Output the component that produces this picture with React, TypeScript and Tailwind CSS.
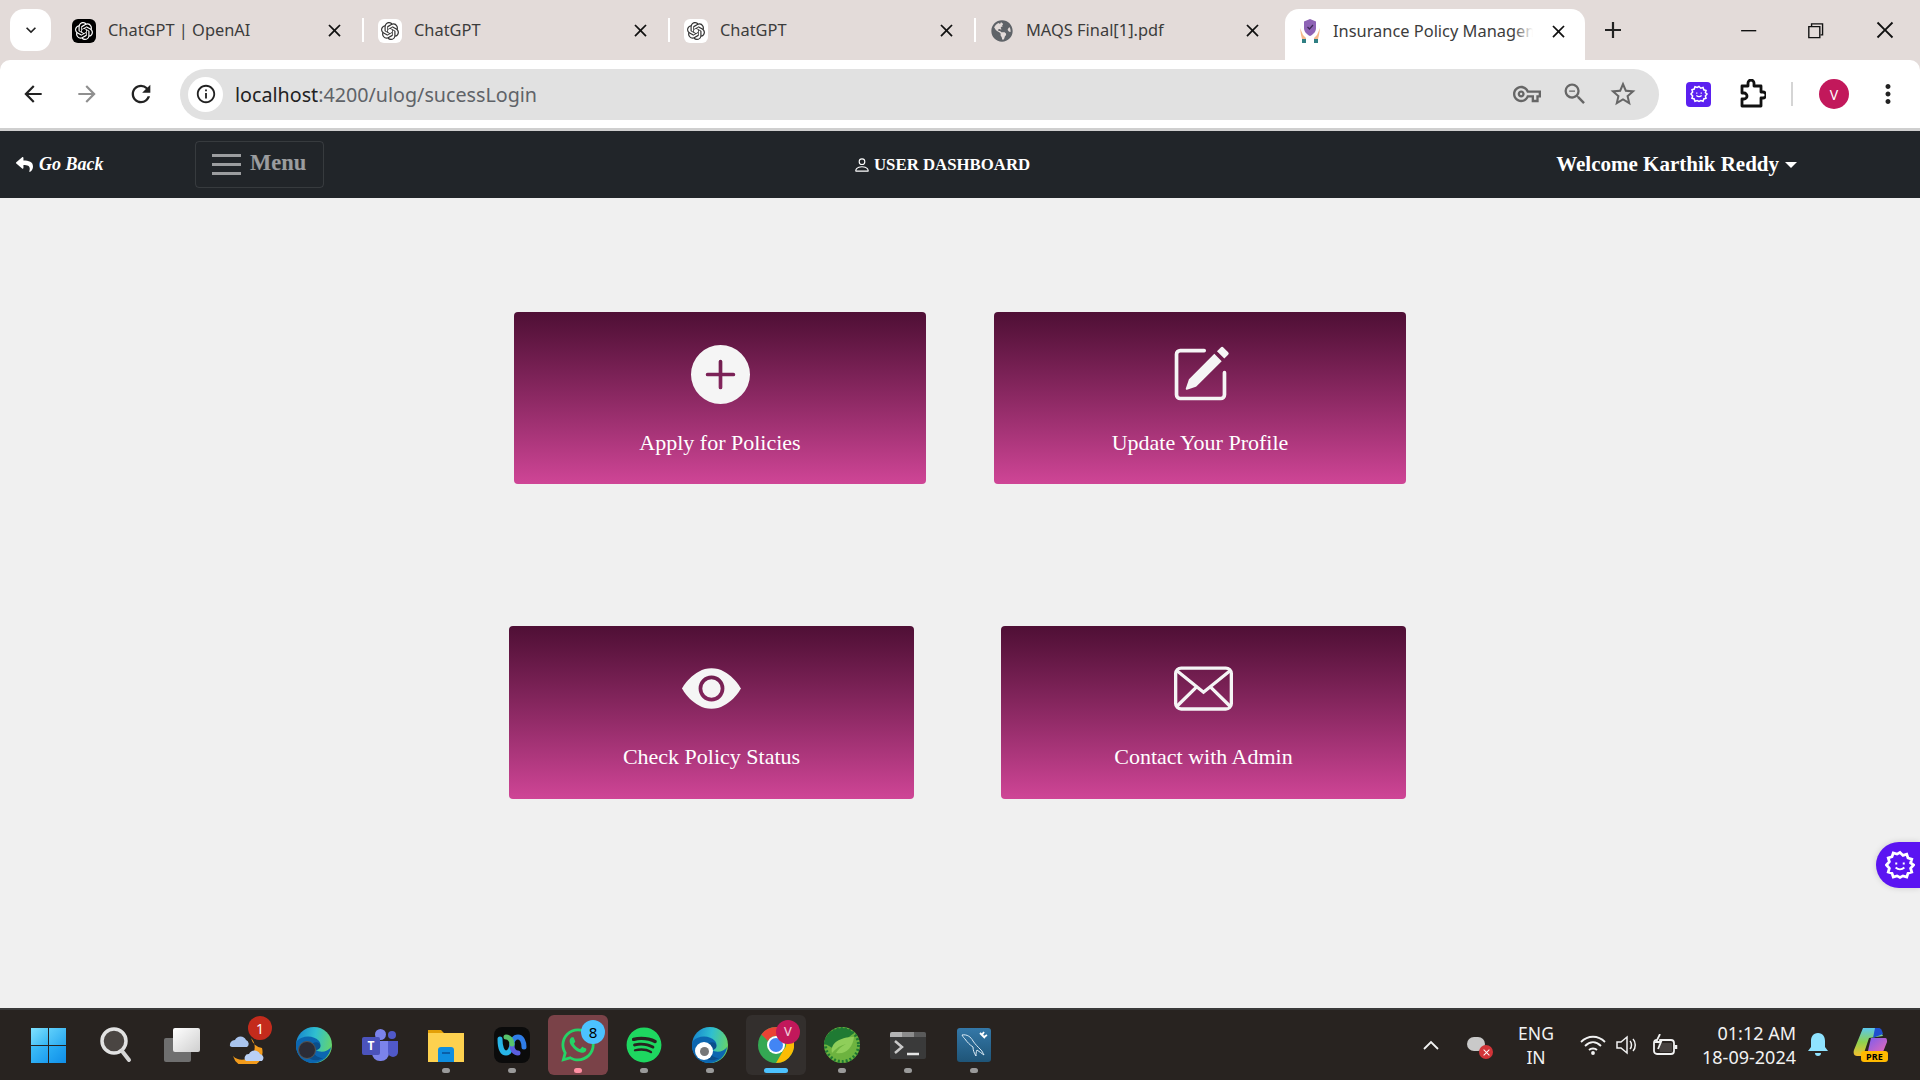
import type { ReactNode } from 'react'
import { BsEyeFill, BsPencilSquare, BsPerson, BsPlusCircleFill } from 'react-icons/bs'
import { FaGlobeAmericas, FaReply, FaSpotify, FaWhatsapp } from 'react-icons/fa'
import {
  MdArrowBack,
  MdArrowForward,
  MdClose,
  MdInfoOutline,
  MdKeyboardArrowDown,
  MdMoreVert,
  MdOutlineVpnKey,
  MdRefresh,
  MdStarBorder,
  MdZoomOut,
} from 'react-icons/md'
import { SiOpenai } from 'react-icons/si'
import { VscChromeClose, VscChromeMinimize, VscChromeRestore } from 'react-icons/vsc'

const uiFont = "font-['Noto_Sans',sans-serif]"
const serif = "font-['Liberation_Serif',serif]"

function ShieldFavicon() {
  return (
    <svg width="24" height="24" viewBox="0 0 24 24">
      <path d="M12 0l6 2.500v6.500c0 4-3 6.500-6 8-3-1.500-6-4-6-8V2.500z" fill="#8e63b5" />
      <path d="M9.500 8l2 2 3.500-4" stroke="#3d2a55" strokeWidth="1.200" fill="none" />
      <path d="M2 9l3 7 3 3v1H4l-1-4zM22 9l-3 7-3 3v1h4l1-4z" fill="#f6b98a" />
      <rect x="4" y="20" width="4" height="4" fill="#2f7f83" />
      <rect x="16" y="20" width="4" height="4" fill="#2f7f83" />
    </svg>
  )
}

function MiniSpark({ size, color, width = 2 }: { size: number; color: string; width?: number }) {
  return (
    <svg width={size} height={size} viewBox="0 0 24 24" fill="none" stroke={color} strokeWidth={width}>
      <path d="M12 2l2.400 2.300 3-.9 1 3 3 1-.9 3L22.800 12l-2.300 2.600.9 3-3 1-1 3-3-.9L12 22l-2.400-1.300-3 .9-1-3-3-1 .9-3L1.200 12l2.300-2.600-.9-3 3-1 1-3 3 .9z" />
      <path d="M9 10v1.500M15 10v1.500M8.500 14c2 1.800 5 1.800 7 0" strokeWidth="1.600" />
    </svg>
  )
}

function Tab({ icon, title, last }: { icon: ReactNode; title: string; last?: boolean }) {
  return (
    <>
      <div className="flex h-[51px] w-[304px] items-center pb-[8px] pl-[14px]">
        <div className="flex h-6 w-6 shrink-0 items-center justify-center">{icon}</div>
        <span className="ml-3 flex-1 truncate text-[16.4px] text-[#3c3c3c]">{title}</span>
        <MdClose className="mr-[17px] text-[21px] text-[#111]" />
      </div>
      {!last && <div className="mb-[9px] h-6 w-[2px] bg-white" />}
    </>
  )
}

function ChatIcon({ dark }: { dark?: boolean }) {
  return (
    <div className={`flex h-6 w-6 items-center justify-center rounded-[6px] ${dark ? 'bg-black text-white' : 'bg-white text-[#333]'}`}>
      <SiOpenai size={18} />
    </div>
  )
}

function TabStrip() {
  return (
    <div className={`flex h-[60px] items-end bg-[#e3dbd9] ${uiFont}`}>
      <div className="mb-[9px] ml-[10px] mr-[7px] flex h-[42px] w-[41px] items-center justify-center rounded-[14px] bg-white">
        <MdKeyboardArrowDown size={20} className="text-[#222]" />
      </div>
      <div className="flex h-[51px] items-center">
        <Tab icon={<ChatIcon dark />} title="ChatGPT | OpenAI" />
        <Tab icon={<ChatIcon />} title="ChatGPT" />
        <Tab icon={<ChatIcon />} title="ChatGPT" />
        <Tab icon={<FaGlobeAmericas size={22} className="text-[#5f6368]" />} title="MAQS Final[1].pdf" last />
      </div>
      <div className="ml-[5px] flex h-[51px] w-[300px] items-center rounded-t-[14px] bg-white pb-[7px] pl-[13px]">
        <ShieldFavicon />
        <span className="relative ml-[11px] w-[200px] overflow-hidden whitespace-nowrap text-[16.4px] text-[#3c3c3c]">
          Insurance Policy Management
          <span className="absolute inset-y-0 right-0 w-5 bg-gradient-to-r from-transparent to-white" />
        </span>
        <MdClose className="ml-[15px] text-[21px] text-[#111]" />
      </div>
      <div className="mb-[9px] ml-[16px] flex h-[42px] w-[24px] items-center justify-center text-[#222]">
        <svg width="18" height="18" viewBox="0 0 18 18" stroke="currentColor" strokeWidth="2.200">
          <path d="M9 1v16M1 9h16" />
        </svg>
      </div>
      <div className="mb-[9px] ml-[112px] flex h-[42px] items-center text-[#111]">
        <VscChromeMinimize size={22} />
        <VscChromeRestore size={22} className="ml-[45px]" />
        <VscChromeClose size={24} className="ml-[47px]" />
      </div>
    </div>
  )
}

function PuzzleIcon() {
  return (
    <svg className="ml-[27px]" width="28" height="30" viewBox="0 0 28 30" fill="none" stroke="#111" strokeWidth="2.800" strokeLinejoin="round">
      <path d="M4 7h6V4a3 3 0 0 1 6 0v3h7v6h2a3 3 0 0 1 0 6h-2v8H4v-7h2a3 3 0 0 0 0-6H4z" />
    </svg>
  )
}

function Toolbar() {
  return (
    <div className="border-b-[3px] border-[#cfcfcf] bg-[#e3dbd9]">
      <div className={`flex h-[68px] items-center rounded-t-[10px] bg-white ${uiFont}`}>
        <MdArrowBack size={26} className="ml-[20px] text-[#222]" />
        <MdArrowForward size={26} className="ml-[28px] text-[#8f8f8f]" />
        <MdRefresh size={28} className="ml-[27px] text-[#222]" />
        <div className="ml-[25px] flex h-[51px] w-[1479px] items-center rounded-full bg-[#e1e1e1] pl-2">
          <div className="flex h-[35px] w-[35px] items-center justify-center rounded-full bg-white">
            <MdInfoOutline size={22} className="text-[#222]" />
          </div>
          <div className="ml-3 mt-[1px] text-[19.7px] text-[#5f6368]">
            <span className="text-[#222]">localhost</span>:4200/ulog/sucessLogin
          </div>
          <MdOutlineVpnKey size={28} className="ml-auto text-[#666]" />
          <MdZoomOut size={28} className="ml-[20px] text-[#666]" />
          <MdStarBorder size={30} className="ml-[19px] mr-[21px] text-[#666]" />
        </div>
        <div className="ml-[27px] flex h-[25px] w-[25px] items-center justify-center rounded-[4px] bg-[#5b20f0]">
          <MiniSpark size={18} color="#ffffff" />
        </div>
        <PuzzleIcon />
        <div className="ml-[25px] h-6 w-[2px] bg-[#d5d5d5]" />
        <div className="ml-[26px] flex h-[30px] w-[30px] items-center justify-center rounded-full bg-[#c2185b] text-[14px] text-white">V</div>
        <MdMoreVert size={30} className="ml-[24px] text-[#222]" />
      </div>
    </div>
  )
}

function Navbar() {
  return (
    <nav className={`flex h-[67px] items-center bg-[#212529] text-white ${serif}`}>
      <div className="flex w-[195px] items-center pl-4">
        <FaReply size={17} />
        <span className="ml-[6px] text-[18px] font-bold italic">Go Back</span>
      </div>
      <div className="flex h-[47px] w-[129px] items-center rounded-[4px] border border-white/10 pl-4 text-white/55">
        <div className="flex w-[29px] flex-col gap-[6px]">
          <div className="h-[3px] bg-white/55" />
          <div className="h-[3px] bg-white/55" />
          <div className="h-[3px] bg-white/55" />
        </div>
        <span className="mb-[3px] ml-[9px] text-[22.500px] font-bold">Menu</span>
      </div>
      <div className="ml-[529px] flex items-center">
        <BsPerson size={18} />
        <span className="ml-[3px] mt-[1px] text-[16.800px] font-bold">USER DASHBOARD</span>
      </div>
      <div className="ml-auto mr-[123px] flex items-center">
        <span className="text-[21px] font-bold">Welcome Karthik Reddy</span>
        <div className="ml-[6px] h-0 w-0 border-x-[6px] border-t-[6px] border-x-transparent border-t-white" />
      </div>
    </nav>
  )
}

function EnvelopeIcon() {
  return (
    <svg width="59" height="59" viewBox="0 0 16 16" fill="none" stroke="currentColor" strokeWidth="0.9">
      <rect x="0.450" y="2.450" width="15.100" height="11.100" rx="1.500" />
      <path d="M0.800 3.200 8 9l7.200-5.800M0.800 12.800 6 7.700M15.200 12.800 10 7.700" />
    </svg>
  )
}

function Card({ icon, label, size }: { icon: ReactNode; label: string; size: string }) {
  return (
    <div className={`flex flex-col items-center rounded-[4px] bg-gradient-to-b from-[#4f0f35] to-[#cf4596] text-white ${size} ${serif}`}>
      <div className="mt-[32px] flex h-[60px] w-[60px] items-center justify-center text-[#f5f5f5]">{icon}</div>
      <div className="mt-[27px] text-[22px] leading-6">{label}</div>
    </div>
  )
}

function FloatingButton() {
  return (
    <div className="absolute right-0 top-[644px] flex h-[46px] w-[44px] items-center justify-center rounded-l-full bg-[#5b14f2] pl-1 shadow-[0_0_6px_rgba(0,0,0,0.15)]">
      <MiniSpark size={30} color="#ffffff" width={2.200} />
    </div>
  )
}

function WindowsLogo() {
  return (
    <div className="mr-1 grid h-[35px] w-[35px] grid-cols-2 gap-[1px]">
      <div className="bg-gradient-to-br from-[#7fe3ff] to-[#2fb5f2]" />
      <div className="bg-gradient-to-br from-[#5fd0fb] to-[#22a7ef]" />
      <div className="bg-gradient-to-br from-[#3fc0f7] to-[#1a9bef]" />
      <div className="bg-gradient-to-br from-[#2bb0f5] to-[#0f8ee8]" />
    </div>
  )
}

function SearchIcon() {
  return (
    <svg width="34" height="38" viewBox="0 0 34 38" fill="none">
      <circle cx="15" cy="15" r="12" fill="#4a4542" stroke="#e2e2e2" strokeWidth="3.500" />
      <path d="M23 25l7 9" stroke="#d5d5d5" strokeWidth="4" strokeLinecap="round" />
    </svg>
  )
}

function TaskView() {
  return (
    <div className="relative h-[34px] w-[36px]">
      <div className="absolute bottom-0 left-0 h-[24px] w-[27px] rounded-[2px] bg-[#6f6f6f]" />
      <div className="absolute right-0 top-0 h-[24px] w-[27px] rounded-[2px] bg-gradient-to-br from-white to-[#cfcfcf]" />
    </div>
  )
}

function WidgetsIcon() {
  return (
    <svg width="38" height="38" viewBox="0 0 38 38">
      <path d="M22 12a13 13 0 0 0 11 10A15 15 0 0 1 4 30a12 12 0 0 0 18-18z" fill="#f29b1c" />
      <path d="M1 20a5 5 0 0 1 5-6 6 6 0 0 1 11 0 4 4 0 0 1 1 7H4a3 3 0 0 1-3-1z" fill="#a9c4ee" />
      <path d="M17 35a4 4 0 0 1 3-7 6 6 0 0 1 11 0 4 4 0 0 1 2 7z" fill="#b9d0f5" />
    </svg>
  )
}

function EdgeIcon({ id }: { id: string }) {
  return (
    <svg width="36" height="36" viewBox="0 0 36 36">
      <defs>
        <linearGradient id={id} x1="0" y1="0.300" x2="1" y2="0.500">
          <stop offset="0" stopColor="#1787cf" />
          <stop offset="0.500" stopColor="#2fbfd0" />
          <stop offset="1" stopColor="#66d46a" />
        </linearGradient>
      </defs>
      <circle cx="18" cy="18" r="18" fill={`url(#${id})`} />
      <path d="M1 14c5-6 17-6 22 0 3 4 1 8-3 9 4 3 12 2 15-3-1 9-9 16-18 16C7 36 0 28 0 19c0-2 0-3 1-5z" fill="#0c66b0" />
      <path d="M14 20c1-4 6-6 9-4 3 3 1 7-3 7-2 0-3 1-2 3 1 3 6 5 9 5-8 5-16 1-17-5 0-2 2-4 4-6z" fill="#0a4f8c" />
    </svg>
  )
}

function TeamsIcon() {
  return (
    <div className="relative h-[36px] w-[36px]">
      <div className="absolute left-[13px] top-[2px] h-[11px] w-[11px] rounded-full bg-[#7b83eb]" />
      <div className="absolute right-[2px] top-[4px] h-[8px] w-[8px] rounded-full bg-[#5059c9]" />
      <div className="absolute bottom-[2px] left-[10px] h-[20px] w-[17px] rounded-b-[8px] bg-[#7b83eb]" />
      <div className="absolute bottom-[6px] right-0 h-[16px] w-[10px] rounded-b-[5px] bg-[#5059c9]" />
      <div className="absolute left-0 top-[10px] flex h-[18px] w-[18px] items-center justify-center rounded-[2px] bg-[#4b53bc] text-[12px] font-bold text-white">T</div>
    </div>
  )
}

function FolderIcon() {
  return (
    <svg width="36" height="34" viewBox="0 0 36 34">
      <path d="M0 2h13l3 3h20v6H0z" fill="#e3a008" />
      <rect y="5" width="36" height="29" fill="#fdd14f" />
      <path d="M10 22a3 3 0 0 1 3-3h10a3 3 0 0 1 3 3v12H10z" fill="#0f8ee0" />
      <rect x="14" y="24" width="8" height="2" fill="#0a5fa8" />
    </svg>
  )
}

function WebexIcon() {
  return (
    <div className="flex h-[36px] w-[36px] items-center justify-center rounded-[8px] bg-[#0b0b0b]">
      <svg width="30" height="22" viewBox="0 0 30 22" fill="none" strokeWidth="5" strokeLinecap="round">
        <path d="M3 5c0 8 2 14 6 14s6-6 6-9" stroke="#27b5e8" />
        <path d="M15 10c0-3 2-7 6-7s6 5 6 10" stroke="#2f7de8" />
        <path d="M15 12c0 3 2 7 6 7" stroke="#5b5fe0" />
        <path d="M9 3c3 0 6 3 6 7" stroke="#58c26b" />
      </svg>
    </div>
  )
}

function ChromeIcon() {
  return (
    <svg width="36" height="36" viewBox="0 0 36 36">
      <circle cx="18" cy="18" r="18" fill="#34a853" />
      <path d="M18 0a18 18 0 0 1 15.600 9H18a9 9 0 0 0-8 5L3.400 7.500A18 18 0 0 1 18 0z" fill="#ea4335" />
      <path d="M33.600 9A18 18 0 0 1 18 36l7.800-13.500A9 9 0 0 0 25 9z" fill="#fbbc04" />
      <circle cx="18" cy="18" r="9" fill="white" />
      <circle cx="18" cy="18" r="7" fill="#4285f4" />
    </svg>
  )
}

function SpringIcon() {
  return (
    <svg width="36" height="36" viewBox="0 0 36 36">
      <circle cx="18" cy="18" r="18" fill="#6db33f" />
      <circle cx="18" cy="18" r="16.500" fill="none" stroke="#1f7a33" strokeWidth="3" strokeDasharray="2 2" />
      <path d="M0 16A18 18 0 0 1 30 6L10 22z" fill="#1f7a33" />
      <path d="M8 26c-2-10 8-16 22-16-1 10-8 18-18 16 2-4 6-7 10-9-5 1-10 4-14 9z" fill="#8fce5a" />
    </svg>
  )
}

function TerminalIcon() {
  return (
    <div className="flex h-[27px] w-[36px] flex-col overflow-hidden rounded-[2px] bg-[#3a3a3a]">
      <div className="flex h-[5px]">
        <div className="w-[12px] bg-[#b5b5b5]" />
        <div className="w-[12px] bg-[#8c8c8c]" />
        <div className="w-[12px] bg-[#5a5a5a]" />
      </div>
      <svg width="36" height="22" viewBox="0 0 36 22" fill="none" stroke="#c9c9c9" strokeWidth="2.500">
        <path d="M5 4l7 6-7 6" />
        <path d="M17 17h12" stroke="#e5e5e5" />
      </svg>
    </div>
  )
}

function MysqlIcon() {
  return (
    <div className="flex h-[34px] w-[34px] items-center justify-center rounded-[3px] bg-gradient-to-b from-[#3478a8] to-[#1f5578]">
      <svg width="30" height="30" viewBox="0 0 30 30" fill="none" stroke="#dcebf5" strokeWidth="1">
        <path d="M3 5c5-1 9 2 11 6 2 3 5 6 8 9 1 1 2 3 3 5-2-2-5-3-7-5-1 2-1 4-1 6-2-3-3-6-3-9-3-2-6-5-8-8-1-1-2-2-3-4z" />
        <path d="M21 3l5 5M25 2l-2 3 2 2 3-2" strokeWidth="1.800" stroke="#ffffff" />
      </svg>
    </div>
  )
}

function CopilotIcon() {
  return (
    <div className="relative ml-[25px] h-[34px] w-[36px]">
      <svg width="34" height="28" viewBox="0 0 34 28">
        <defs>
          <linearGradient id="copilotA" x1="0" y1="0" x2="0" y2="1">
            <stop offset="0" stopColor="#5bc8ef" />
            <stop offset="0.500" stopColor="#8ed14f" />
            <stop offset="1" stopColor="#f5c02e" />
          </linearGradient>
          <linearGradient id="copilotB" x1="0" y1="0" x2="1" y2="1">
            <stop offset="0" stopColor="#7a5cf0" />
            <stop offset="1" stopColor="#f06bb0" />
          </linearGradient>
        </defs>
        <path d="M10 0h16l4 8-14 2-6 18H4c-3 0-4-3-3-6z" fill="url(#copilotA)" />
        <path d="M22 0h4c2 0 3 2 4 6l-10 4z" fill="#1f4fd0" />
        <path d="M18 10h14c2 0 2 2 2 4l-4 10c-1 2-2 3-5 3H14z" fill="url(#copilotB)" />
      </svg>
      <div className="absolute bottom-0 left-[8px] flex h-[11px] w-[27px] items-center justify-center rounded-[3px] bg-[#ffb900] text-[9px] font-bold tracking-wide text-black">PRE</div>
    </div>
  )
}

const taskbarApps: { icon: ReactNode; dot?: 'gray' | 'pink' | 'blue'; bg?: string; badge?: ReactNode }[] = [
  { icon: <WindowsLogo /> },
  { icon: <SearchIcon /> },
  { icon: <TaskView /> },
  {
    icon: <WidgetsIcon />,
    badge: <div className="absolute left-[30px] top-[1px] flex h-6 w-6 items-center justify-center rounded-full bg-[#c42b1c] text-[14px] text-white">1</div>,
  },
  {
    icon: <EdgeIcon id="edgeA" />,
    badge: <div className="absolute left-[14px] top-[26px] h-[18px] w-[18px] rounded-full border border-[#555] bg-[#2c2c36]" />,
  },
  { icon: <TeamsIcon /> },
  { icon: <FolderIcon />, dot: 'gray' },
  { icon: <WebexIcon />, dot: 'gray' },
  {
    icon: <FaWhatsapp size={38} className="text-[#25d366]" />,
    dot: 'pink',
    bg: 'bg-[#7a4248]',
    badge: <div className="absolute left-[33px] top-[5px] flex h-6 w-6 items-center justify-center rounded-full bg-[#4cc2ff] text-[15px] text-black">8</div>,
  },
  { icon: <FaSpotify size={36} className="text-[#1ed760]" />, dot: 'gray' },
  {
    icon: <EdgeIcon id="edgeB" />,
    dot: 'gray',
    badge: (
      <div className="absolute left-[15px] top-[27px] flex h-[18px] w-[18px] items-center justify-center rounded-full bg-white">
        <div className="h-[9px] w-[9px] rounded-full bg-[#777]" />
      </div>
    ),
  },
  {
    icon: <ChromeIcon />,
    dot: 'blue',
    bg: 'bg-[#332f2d]',
    badge: <div className="absolute left-[30px] top-[5px] flex h-6 w-6 items-center justify-center rounded-full bg-[#c2185b] text-[13px] text-white/80">V</div>,
  },
  { icon: <SpringIcon />, dot: 'gray' },
  { icon: <TerminalIcon />, dot: 'gray' },
  { icon: <MysqlIcon />, dot: 'gray' },
]

function TaskbarApp({ icon, dot, bg, badge }: (typeof taskbarApps)[number]) {
  return (
    <div className={`relative flex h-[60px] w-[60px] items-center justify-center rounded-[6px] ${bg ?? ''}`}>
      {icon}
      {badge}
      {dot === 'gray' && <div className="absolute bottom-[2px] h-[5px] w-[8px] rounded-full bg-[#9a9a9a]" />}
      {dot === 'pink' && <div className="absolute bottom-[2px] h-[5px] w-[8px] rounded-full bg-[#ff8fa3]" />}
      {dot === 'blue' && <div className="absolute bottom-[2px] h-[5px] w-[24px] rounded-full bg-[#4cc2ff]" />}
    </div>
  )
}

function Taskbar() {
  return (
    <div className={`flex h-[72px] items-center border-t-2 border-[#3a3a3a] bg-[#282320] text-[#f2f2f2] ${uiFont}`}>
      <div className="ml-[20px] flex gap-[6px]">
        {taskbarApps.map((app, i) => (
          <TaskbarApp key={i} {...app} />
        ))}
      </div>
      <svg className="ml-[419px]" width="16" height="10" viewBox="0 0 16 10" fill="none" stroke="#f2f2f2" strokeWidth="1.800">
        <path d="M1 9l7-7 7 7" />
      </svg>
      <div className="relative ml-[28px] h-[20px] w-[24px]">
        <div className="absolute left-0 top-[2px] h-[14px] w-[18px] rounded-full bg-[#c9c9c9]" />
        <div className="absolute bottom-[-4px] right-[-2px] flex h-[14px] w-[14px] items-center justify-center rounded-full bg-[#d13438] text-white">
          <MdClose size={11} />
        </div>
      </div>
      <div className="ml-[15px] w-[60px] text-center text-[17.500px] leading-[24px]">
        <div>ENG</div>
        <div>IN</div>
      </div>
      <svg className="ml-[14px]" width="26" height="20" viewBox="0 0 26 20" fill="none" stroke="#f2f2f2" strokeWidth="1.800">
        <path d="M1 7c7-7 17-7 24 0M5 11c5-5 11-5 16 0M9 15c2-2 6-2 8 0" />
        <circle cx="13" cy="18" r="1" fill="#f2f2f2" />
      </svg>
      <svg className="ml-[10px]" width="24" height="20" viewBox="0 0 24 20" fill="none" stroke="#f2f2f2" strokeWidth="1.500">
        <path d="M1 7h4l6-5v16l-6-5H1z" />
        <path d="M14 6c2 2 2 6 0 8M17 4c3 3 3 9 0 12" />
      </svg>
      <svg className="ml-[13px]" width="26" height="22" viewBox="0 0 26 22" fill="none" stroke="#f2f2f2" strokeWidth="1.800">
        <rect x="1" y="6" width="20" height="14" rx="3" />
        <path d="M23 11v4" strokeWidth="2.500" />
        <path d="M7 0L3 8h5l-3 7" fill="#282320" />
        <path d="M5 9h14v9H7z" fill="#f2f2f2" stroke="none" opacity="0.150" />
      </svg>
      <div className="ml-[17px] w-[100px] whitespace-nowrap text-right text-[18px] leading-[24px]">
        <div>01:12 AM</div>
        <div>18-09-2024</div>
      </div>
      <svg className="ml-[12px]" width="20" height="24" viewBox="0 0 20 24" fill="#8fe3ff">
        <path d="M10 0c5 0 7 4 7 8v6l3 4H0l3-4V8c0-4 2-8 7-8z" />
        <path d="M7 20h6a3 3 0 0 1-6 0z" />
      </svg>
      <CopilotIcon />
    </div>
  )
}

export default function App() {
  return (
    <div className="flex h-screen w-[1920px] flex-col overflow-hidden bg-[#f0f0f0]">
      <TabStrip />
      <Toolbar />
      <Navbar />
      <main className="relative flex-1 pt-[114px]">
        <div className="ml-[514px] flex gap-[68px]">
          <Card icon={<BsPlusCircleFill size={59} />} label="Apply for Policies" size="h-[172px] w-[412px]" />
          <Card icon={<BsPencilSquare size={59} />} label="Update Your Profile" size="h-[172px] w-[412px]" />
        </div>
        <div className="ml-[509px] mt-[142px] flex gap-[87px]">
          <Card icon={<BsEyeFill size={59} />} label="Check Policy Status" size="h-[173px] w-[405px]" />
          <Card icon={<EnvelopeIcon />} label="Contact with Admin" size="h-[173px] w-[405px]" />
        </div>
        <FloatingButton />
      </main>
      <Taskbar />
    </div>
  )
}
